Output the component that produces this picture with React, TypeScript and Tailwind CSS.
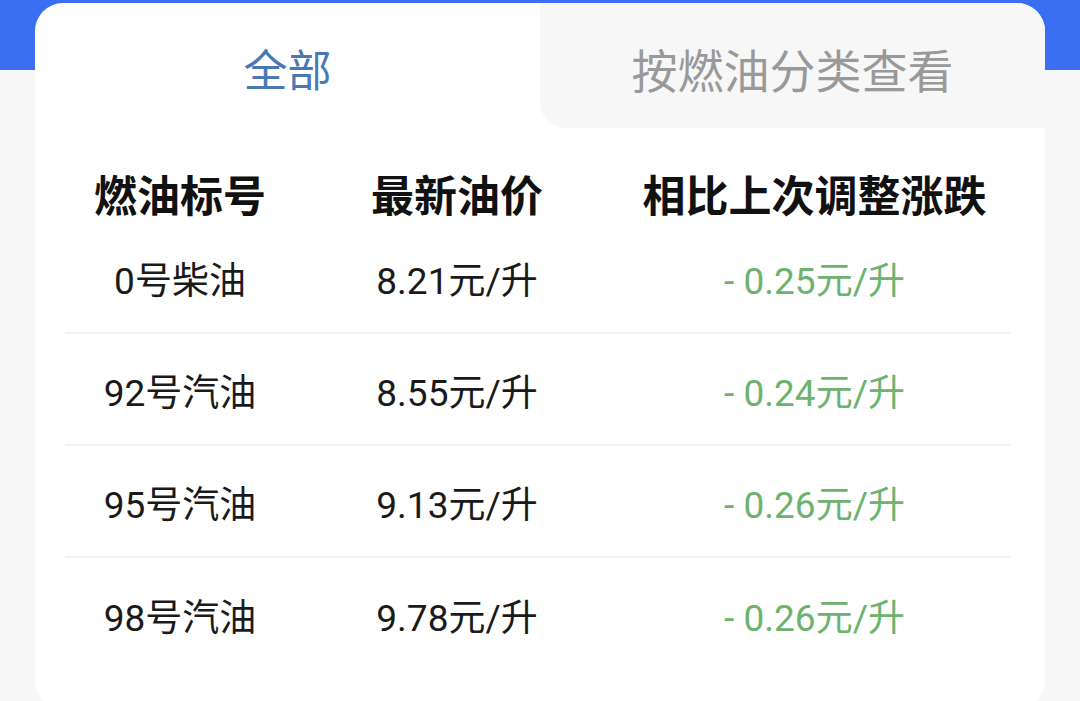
import React from "react";

const rows = [
  { name: "0号柴油", price: "8.21元/升", diff: "- 0.25元/升" },
  { name: "92号汽油", price: "8.55元/升", diff: "- 0.24元/升" },
  { name: "95号汽油", price: "9.13元/升", diff: "- 0.26元/升" },
  { name: "98号汽油", price: "9.78元/升", diff: "- 0.26元/升" },
];

const font = { fontFamily: 'Roboto, "Noto Sans CJK SC", sans-serif' };

export default function App() {
  return (
    <div className="w-[1080px] h-[701px] overflow-hidden bg-[#f7f7f7]" style={font}>
      <div className="h-[70px] bg-[#3b6ef1]" />
      <div className="-mt-[67px] mx-[35px] h-[706px] rounded-[28px] bg-white overflow-hidden">
        <div className="flex h-[125px]">
          <div className="w-1/2 flex items-center justify-center pt-[5px] text-[44px] text-[#4a78b6] font-['Noto_Sans_CJK_SC',sans-serif]">
            全部
          </div>
          <div className="w-1/2 flex items-center justify-center pt-[5px] bg-[#f7f7f7] rounded-bl-[26px] text-[46px] text-[#999999] font-['Noto_Sans_CJK_SC',sans-serif]">
            按燃油分类查看
          </div>
        </div>
        <div className="pl-[30px] pr-[35px]">
          <div className="grid grid-cols-[230px_324px_1fr] h-[94px] pt-[39px] text-[43px] leading-[52px] font-bold text-[#111] font-['Noto_Sans_CJK_SC',sans-serif]">
            <div className="text-center">燃油标号</div>
            <div className="text-center">最新油价</div>
            <div className="text-center">相比上次调整涨跌</div>
          </div>
          {rows.map((r, i) => (
            <div
              key={r.name}
              className={
                "grid grid-cols-[230px_324px_1fr] h-[112px] items-center pt-[10px] text-[37px] " +
                (i < rows.length - 1 ? "border-b-2 border-[#f1f1f1]" : "")
              }
            >
              <div className="text-center text-[#1a1a1a]">{r.name}</div>
              <div className="text-center text-[#1a1a1a]">{r.price}</div>
              <div className="text-center text-[#6bb36e]">{r.diff}</div>
            </div>
          ))}
        </div>
      </div>
    </div>
  );
}
